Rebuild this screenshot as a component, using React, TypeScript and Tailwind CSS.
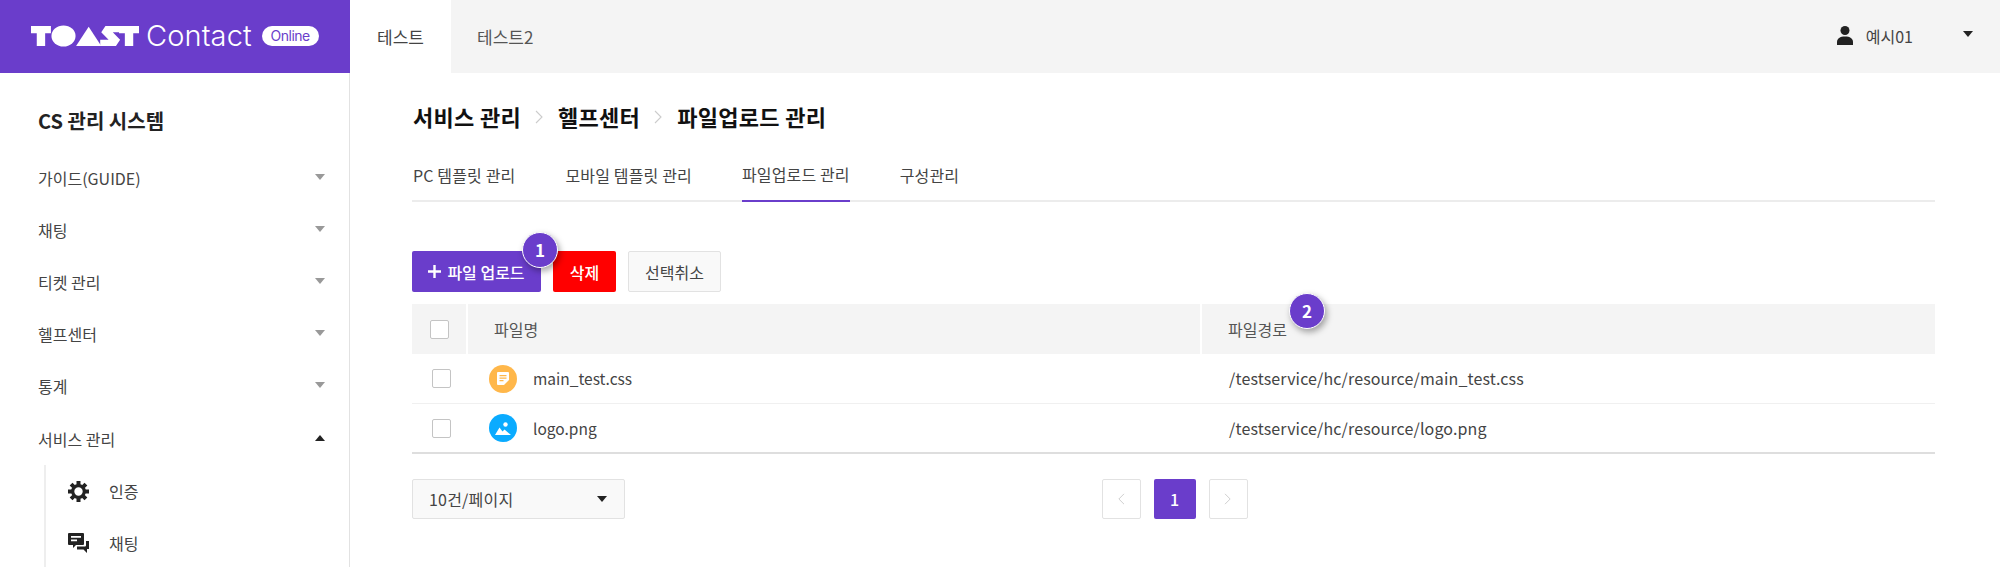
import React from "react";

const font = { fontFamily: '"Noto Sans CJK KR", "Noto Sans", sans-serif' };

function Logo() {
    return (
        <div className="flex items-center pb-[2px]">
            <svg width="108" height="22" viewBox="0 0 103 24" fill="#fff" preserveAspectRatio="none">
                <path d="M0 1h19v8h-5.500v14h-8V9H0z" />
                <circle cx="31" cy="12" r="11.500" />
                <path d="M43 23 55 2l12 21z" />
                <path d="M71 1h14v7h-7l7 8-4 7H66v-7h8l-7-8z" />
                <path d="M84 1h19v8h-5.500v14h-8V9H84z" />
            </svg>
            <span className="ml-[7px] text-[29px] leading-none text-white font-[Inter] font-light tracking-[0.1px]">Contact</span>
            <span className="ml-[10px] w-[57px] h-[20px] bg-white rounded-full text-[#6a3dcb] text-[14px] leading-[20px] text-center font-[Inter] tracking-[-0.5px]">
                Online
            </span>
        </div>
    );
}

function Header() {
    return (
        <header className="h-[73px] flex bg-[#f4f4f4]">
            <div className="w-[350px] bg-[#6a3dcb] pl-[31px] flex items-center">
                <Logo />
            </div>
            <div className="w-[101px] bg-white flex items-center justify-center text-[17px] text-[#444]">테스트</div>
            <div className="pl-[26px] flex items-center text-[17px] text-[#555]">테스트2</div>
            <div className="flex-1 flex items-center justify-end pr-[27px] pb-[2px]">
                <svg width="16" height="19" viewBox="0 0 16 19" fill="#222">
                    <circle cx="8" cy="4.500" r="4.500" />
                    <path d="M0 19v-3c0-3.500 3-5.500 8-5.500s8 2 8 5.500v3z" />
                </svg>
                <span className="ml-[13px] text-[16px] text-[#444]">예시01</span>
                <div className="ml-[50px] mb-[4px] w-0 h-0 border-l-[5px] border-r-[5px] border-t-[6px] border-l-transparent border-r-transparent border-t-[#222]" />
            </div>
        </header>
    );
}

function MenuItem({ label, open }: { label: string; open?: boolean }) {
    return (
        <div className="h-[52px] flex items-center justify-between pr-[24px] text-[16px] text-[#444]">
            <span>{label}</span>
            {open ? (
                <div className="w-0 h-0 mb-[2px] border-l-[5px] border-r-[5px] border-b-[6px] border-l-transparent border-r-transparent border-b-[#222]" />
            ) : (
                <div className="w-0 h-0 mb-[2px] border-l-[5px] border-r-[5px] border-t-[6px] border-l-transparent border-r-transparent border-t-[#999]" />
            )}
        </div>
    );
}

function GearIcon() {
    return (
        <svg width="21" height="21" viewBox="0 0 21 21" fill="#222">
            <circle cx="10.500" cy="10.500" r="5.800" fill="none" stroke="#222" strokeWidth="3.200" />
            <path d="M8.500 0h4v4h-4zM8.500 17h4v4h-4zM0 8.500h4v4H0zM17 8.500h4v4h-4z" />
            <path d="M8.500 0h4v4h-4zM8.500 17h4v4h-4zM0 8.500h4v4H0zM17 8.500h4v4h-4z" transform="rotate(45 10.500 10.500)" />
        </svg>
    );
}

function ChatIcon() {
    return (
        <svg width="21" height="20" viewBox="0 0 21 20" fill="#222">
            <path d="M1 0h14a1 1 0 0 1 1 1v10a1 1 0 0 1-1 1H8l-3 3v-3H1a1 1 0 0 1-1-1V1a1 1 0 0 1 1-1z" />
            <path d="M3 3h10v1.800H3zM3 6.500h6v1.800H3z" fill="#fff" />
            <path d="M18 8h3v8h-2v4l-3.500-3.500H9v-3h8a1 1 0 0 0 1-1z" />
        </svg>
    );
}

function Sidebar() {
    return (
        <aside className="w-[350px] shrink-0 border-r border-[#e2e2e2] pl-[38px] h-[494px] overflow-hidden">
            <div className="pt-[34px] h-[79px] text-[20px] font-bold text-[#222] leading-[28px]">CS 관리 시스템</div>
            <MenuItem label="가이드(GUIDE)" />
            <MenuItem label="채팅" />
            <MenuItem label="티켓 관리" />
            <MenuItem label="헬프센터" />
            <MenuItem label="통계" />
            <div className="pt-[1px]">
                <MenuItem label="서비스 관리" open />
            </div>
            <div className="ml-[6px] border-l-2 border-[#eee] pl-[22px]">
                <div className="h-[52px] flex items-center text-[16px] text-[#444]">
                    <GearIcon />
                    <span className="ml-[20px]">인증</span>
                </div>
                <div className="h-[52px] flex items-center text-[16px] text-[#444]">
                    <ChatIcon />
                    <span className="ml-[20px]">채팅</span>
                </div>
            </div>
        </aside>
    );
}

function Chevron({ color, left, size = 14 }: { color: string; left?: boolean; size?: number }) {
    return (
        <svg width={size / 2 + 2} height={size} viewBox="0 0 9 14" fill="none" stroke={color} strokeWidth="1.100">
            <path d={left ? "M8 1 2 7l6 6" : "M1 1l6 6-6 6"} />
        </svg>
    );
}

function Badge({ n, className }: { n: number; className: string }) {
    return (
        <div className={"absolute w-[36px] h-[36px] rounded-full bg-[#6a3dcb] border border-white text-white text-[17px] font-bold flex items-center justify-center shadow-[2px_3px_6px_rgba(0,0,0,0.35)] " + className}>
            {n}
        </div>
    );
}

function Checkbox() {
    return <div className="w-[19px] h-[19px] bg-white border border-[#c4c4c4] rounded-[2px]" />;
}

function FileRow({ name, path, icon, bottom }: { name: string; path: string; icon: React.ReactNode; bottom: string }) {
    return (
        <div className={"flex h-[50px] items-center text-[#444] " + bottom}>
            <div className="w-[56px] pl-[20px]">
                <Checkbox />
            </div>
            <div className="w-[734px] pl-[21px] flex items-center">
                {icon}
                <span className="ml-[16px] text-[15.500px] leading-[24px] pb-[1px]">{name}</span>
            </div>
            <div className="pl-[27px] text-[16px] leading-[24px] pb-[1px] tracking-[0.13px]">{path}</div>
        </div>
    );
}

function NoteIcon() {
    return (
        <div className="w-[28px] h-[28px] rounded-full bg-[#ffb74a] flex items-center justify-center">
            <svg width="12" height="13" viewBox="0 0 12 13">
                <path d="M1 0h10a1 1 0 0 1 1 1v7l-5 5H1a1 1 0 0 1-1-1V1a1 1 0 0 1 1-1z" fill="#fff" />
                <path d="M2.500 3h7v1.300h-7zM2.500 5.500h7v1.300h-7zM2.500 8h4v1.300h-4z" fill="#ffb74a" />
            </svg>
        </div>
    );
}

function ImageIcon() {
    return (
        <div className="w-[28px] h-[28px] rounded-full bg-[#0aabff] flex items-center justify-center">
            <svg width="16" height="13" viewBox="0 0 16 13" fill="#fff">
                <circle cx="10.500" cy="2.500" r="2.200" />
                <path d="M0 13 4.500 5.500 7.500 9.500 9.500 7.500 16 13z" />
            </svg>
        </div>
    );
}

function Main() {
    return (
        <main className="flex-1 pl-[62px] pr-[65px]">
            <div className="pl-[1px] pt-[26px] h-[73px] flex items-start gap-[14px] text-[22px] font-semibold text-[#111] leading-[34px] tracking-[0.3px]">
                <span>서비스 관리</span>
                <span className="mt-[11px]"><Chevron color="#ccc" /></span>
                <span>헬프센터</span>
                <span className="mt-[11px]"><Chevron color="#ccc" /></span>
                <span>파일업로드 관리</span>
            </div>
            <div className="flex h-[56px] pl-[1px] border-b-2 border-[#ececec] text-[16px] text-[#444] gap-[50px] tracking-[0.15px]">
                <div className="h-[56px] flex items-center pt-[1px]">PC 템플릿 관리</div>
                <div className="h-[56px] flex items-center pt-[1px]">모바일 템플릿 관리</div>
                <div className="h-[56px] flex items-center pt-[1px] border-b-2 border-[#6a3dcb]">파일업로드 관리</div>
                <div className="h-[56px] flex items-center pt-[1px]">구성관리</div>
            </div>
            <div className="mt-[49px] flex gap-[12px] text-[16px] relative">
                <div className="w-[129px] h-[41px] bg-[#6a3dcb] rounded-[2px] text-white font-medium flex items-center justify-center gap-[6px]">
                    <svg width="13" height="13" viewBox="0 0 13 13" fill="#fff"><path d="M5.300 0h2.400v5.300H13v2.400H7.700V13H5.300V7.700H0V5.300h5.300z" /></svg>
                    파일 업로드
                </div>
                <div className="w-[63px] h-[41px] bg-[#ff0000] rounded-[2px] text-white font-medium flex items-center justify-center">삭제</div>
                <div className="w-[93px] h-[41px] bg-[#f9f9f9] border border-[#e2e2e2] rounded-[2px] text-[#444] flex items-center justify-center">선택취소</div>
                <Badge n={1} className="left-[110px] top-[-19px]" />
            </div>
            <div className="mt-[12px] relative">
                <div className="flex h-[50px] bg-[#f4f4f4] text-[16px] text-[#555] items-center">
                    <div className="w-[56px] h-full pl-[18px] border-r-2 border-white flex items-center"><Checkbox /></div>
                    <div className="w-[734px] h-full pl-[26px] border-r-2 border-white flex items-center">파일명</div>
                    <div className="pl-[26px]">파일경로</div>
                </div>
                <FileRow name="main_test.css" path="/testservice/hc/resource/main_test.css" icon={<NoteIcon />} bottom="border-b border-[#f0f0f0]" />
                <FileRow name="logo.png" path="/testservice/hc/resource/logo.png" icon={<ImageIcon />} bottom="border-b-2 border-[#dedede]" />
                <Badge n={2} className="left-[877px] top-[-11px]" />
            </div>
            <div className="mt-[25px] relative flex justify-center">
                <div className="absolute left-0 top-0 w-[213px] h-[40px] bg-[#f9f9f9] border border-[#e2e2e2] rounded-[2px] flex items-center justify-between pl-[16px] pr-[17px] text-[16px] text-[#444]">
                    <span className="tracking-[0.2px]">10건/페이지</span>
                    <div className="w-0 h-0 border-l-[5px] border-r-[5px] border-t-[6px] border-l-transparent border-r-transparent border-t-[#222]" />
                </div>
                <div className="flex gap-[13px] ml-[2px]">
                    <div className="w-[39px] h-[40px] border border-[#e2e2e2] rounded-[2px] flex items-center justify-center"><Chevron color="#ccc" left size={12} /></div>
                    <div className="w-[42px] h-[40px] bg-[#6a3dcb] rounded-[2px] text-white text-[16px] font-medium flex items-center justify-center">1</div>
                    <div className="w-[39px] h-[40px] border border-[#e2e2e2] rounded-[2px] flex items-center justify-center"><Chevron color="#ccc" size={12} /></div>
                </div>
            </div>
        </main>
    );
}

export default function App() {
    return (
        <div style={font} className="w-[2000px] h-[567px] bg-white overflow-hidden">
            <Header />
            <div className="flex">
                <Sidebar />
                <Main />
            </div>
        </div>
    );
}
